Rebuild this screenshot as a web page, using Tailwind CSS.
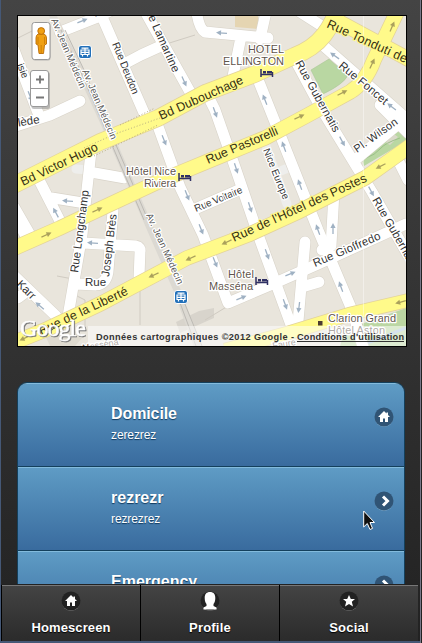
<!DOCTYPE html>
<html lang="fr">
<head>
<meta charset="utf-8">
<title>Homescreen</title>
<script src="https://cdn.jsdelivr.net/npm/@tailwindcss/browser@4"></script>
</head>
<body class="w-[422px] h-[643px] overflow-hidden bg-[#222] font-['Liberation_Sans',Arial,sans-serif]">
<div class="relative flex flex-col w-[422px] h-[643px] overflow-hidden bg-linear-to-b from-[#444] to-[#222] border-l border-[#455876] pl-4">

  <svg class="shrink-0 mt-[15px] w-[390px] h-[332px] border border-black" viewBox="18 16 388 330" font-family="Liberation Sans, Arial, sans-serif">
    <defs>
      <g id="arrow"><path d="M-5 0H3" stroke-width="1.3" fill="none"/><path d="M1 -2.6L6 0L1 2.6Z" stroke="none"/></g>
      <g id="bed"><path d="M-6 -4V4M-6 1.5H5.500M5.500 -1V4" stroke="#303064" stroke-width="1.500" fill="none"/><path d="M-4 -2h3v2.500h-3zM0 -2h5v2.500h-5z" fill="#303064"/></g>
      <g id="tram"><rect x="-6.500" y="-6.500" width="13" height="13" rx="2.500" fill="#2270b9" stroke="#fff"/><path d="M-3.500 -3.800H3.500M0 -4V-2M-4 -2H4V2.500H-4ZM-4 .3H4M0 -2V2M-2.500 2.500V4.500M2.500 2.500V4.500" stroke="#fff" stroke-width="1.200" fill="none"/></g>
      <g id="white-roads">
        <path d="M60 32L98 17L112 10M100 12L148 122M142 6L190 92M196 6Q198 28 205 32L268 38M266 12L260 39M241 37L233 76M124 64L141 55L163 45"/>
        <path d="M155 118L180 187L203 235L228 303L275 283L318 264L406 224M205 90L215 110L235 167L260 240L291 325M255 72L277 127L318 230L352 310L364 350"/>
        <path d="M293 56L322 110L372 192L408 255M318 41L408 120M300 12L325 28M355 160L402 121M380 105L408 133M195 209L241 189M334 193L331 246L322 250M305 242L298 322M302 287L319 282M398 160L408 180"/>
        <path d="M14 50L38 113M10 128L50 115L80 101M91 152L82 235L67 322M90 172L124 178M38 178L62 225M53 198L84 203M14 207L33 240M113 210L108 272Q106 284 96 285L76 284M83 243L136 246Q141 247 140 252L139 278M8 270L56 316M18 222L28 240M18 298L26 292"/>
      </g>
      <g id="yellow-roads">
        <path stroke-width="16" d="M10 187L60 162L100 142L158 118L205 93L255 74L294 56Q313 49 324 35Q331 26 338 10"/>
        <path stroke-width="14" d="M332 18L410 60M10 250L60 228L100 209L160 181L211 160L265 138L308 115L350 92Q366 82 374 60L398 10M10 344L45 330L100 304L187 258L250 234L298 212L365 178L410 146"/>
        <path stroke-width="13" d="M225 350L288 333L350 314L410 300"/>
      </g>
    </defs>
    <rect x="18" y="16" width="388" height="330" fill="#e9e5dc"/>
    <path d="M235 16H258V29L235 27Z" fill="#e5d5b2"/>
    <path d="M311 70L329 59L348 75Q344 84 323 94Z" fill="#b9d7a2" stroke="#a9c696" stroke-width=".6"/>
    <path d="M361 154L408 121V140L364 166Z" fill="#b9d7a2"/><path d="M386 143l4-7 4-2 4 3-8 8z" fill="#d9d8c8"/><path d="M366 158Q375 155 380 149T400 138" fill="none" stroke="#9cbf8a"/>
    <path d="M345 330L406 308V346H340Z" fill="#bbd6a3"/><path d="M360 346L406 328" stroke="#aac4dd" stroke-width="3"/>
    <path d="M176 322L199 311L214 308V318L180 333Z" fill="#d8d4cc"/><path d="M45 335L70 326L82 338L75 346H50Z" fill="#dedacf"/>
    <path d="M57 276L73 279M140 273V325M163 45L195 35M205 320L228 306M18 38L32 31M75 295L85 300V330" stroke="#d0cbc2" fill="none"/>
    <path d="M76 169L88 170M263 138L287 204M278 172L288 168" stroke="#eeeeec" stroke-width="9" stroke-linecap="round"/>
    <g fill="none" stroke-linecap="round" stroke-linejoin="round">
      <use href="#white-roads" stroke="#d9d4ca" stroke-width="12"/>
      <use href="#white-roads" stroke="#fff" stroke-width="10.800"/>
    </g>
    <path d="M52 14L82 75L115 147L150 228L177 290L198 348" fill="none" stroke="#dcd9d2" stroke-width="7"/>
    <path d="M65 30L84 70L116 145L148 220M180 292L202 346M61 30L80 70L112 145L144 220M176 292L196 346" fill="none" stroke="#bdbab4" stroke-width="1"/>
    <g fill="none">
      <g stroke="#e3d39a"><path stroke-width="17.500" d="M10 187L60 162L100 142L158 118L205 93L255 74L294 56Q313 49 324 35Q331 26 338 10"/><path stroke-width="15.500" d="M332 18L410 60M10 250L60 228L100 209L160 181L211 160L265 138L308 115L350 92Q366 82 374 60L398 10M10 344L45 330L100 304L187 258L250 234L298 212L365 178L410 146"/><path stroke-width="14.500" d="M225 350L288 333L350 314L410 300"/></g>
      <use href="#yellow-roads" stroke="#fffa8a"/>
    </g>
    <path d="M84 148L115 134L160 118M94 156L158 125M120 125L155 108" fill="none" stroke="#b8ae80" stroke-dasharray="1 2"/>
    <path d="M363.500 16V346" stroke="#fff" stroke-opacity=".4"/>
    <g fill="#9fb1c3" stroke="#9fb1c3">
      <use href="#arrow" transform="translate(82 21) rotate(-22)"/><use href="#arrow" transform="translate(184 81) rotate(66)"/><use href="#arrow" transform="translate(222 33) rotate(184)"/>
      <use href="#arrow" transform="translate(265 100) rotate(-112)"/><use href="#arrow" transform="translate(215 112) rotate(70)"/><use href="#arrow" transform="translate(335 56) rotate(215)"/><use href="#arrow" transform="translate(392 107) rotate(218)"/>
      <use href="#arrow" transform="translate(164 140) rotate(68)"/><use href="#arrow" transform="translate(187 195) rotate(68)"/><use href="#arrow" transform="translate(201 229) rotate(68)"/><use href="#arrow" transform="translate(215 262) rotate(68)"/>
      <use href="#arrow" transform="translate(284 147) rotate(-110)"/><use href="#arrow" transform="translate(300 185) rotate(-110)"/><use href="#arrow" transform="translate(318 230) rotate(-110)"/><use href="#arrow" transform="translate(341 287) rotate(-110)"/>
      <use href="#arrow" transform="translate(236 168) rotate(72)"/><use href="#arrow" transform="translate(250 207) rotate(72)"/><use href="#arrow" transform="translate(267 254) rotate(70)"/><use href="#arrow" transform="translate(285 304) rotate(70)"/>
      <use href="#arrow" transform="translate(299 307) rotate(97)"/><use href="#arrow" transform="translate(333 229) rotate(-90)"/><use href="#arrow" transform="translate(342 141) rotate(62)"/><use href="#arrow" transform="translate(371 191) rotate(62)"/>
      <use href="#arrow" transform="translate(241 298) rotate(-23)"/><use href="#arrow" transform="translate(290 274) rotate(-22)"/><use href="#arrow" transform="translate(68 201) rotate(184)"/><use href="#arrow" transform="translate(56 213) rotate(-118)"/><use href="#arrow" transform="translate(93 243) rotate(184)"/><use href="#arrow" transform="translate(40 306) rotate(220)"/><use href="#arrow" transform="translate(30 96) rotate(68)"/>
    </g>
    <g fill="#aaa05c" stroke="#aaa05c">
      <use href="#arrow" transform="translate(97 210) rotate(-24)"/><use href="#arrow" transform="translate(46 235) rotate(-24)"/><use href="#arrow" transform="translate(154 275) rotate(155)"/><use href="#arrow" transform="translate(191 258) rotate(155)"/><use href="#arrow" transform="translate(25 338) rotate(155)"/><use href="#arrow" transform="translate(227 242) rotate(155)"/>
      <use href="#arrow" transform="translate(299 117) rotate(-24)"/><use href="#arrow" transform="translate(342 93) rotate(-27)"/><use href="#arrow" transform="translate(372 64) rotate(-65)"/><use href="#arrow" transform="translate(392 27) rotate(-67)"/><use href="#arrow" transform="translate(381 166) rotate(153)"/><use href="#arrow" transform="translate(401 302) rotate(165)"/>
    </g>
    <g font-size="12.500" fill="#363012" stroke="#fffa8a" stroke-width="2" paint-order="stroke">
      <text transform="translate(23 186) rotate(-25.500)" textLength="84">Bd Victor Hugo</text>
      <text transform="translate(161 120) rotate(-24)" textLength="91">Bd Dubouchage</text>
      <text transform="translate(208 164) rotate(-22.900)" textLength="77">Rue Pastorelli</text>
      <text transform="translate(234 242) rotate(-24.500)" textLength="147">Rue de l'Hôtel des Postes</text>
      <text transform="translate(41 335) rotate(-25)" textLength="97">Rue de la Liberté</text>
      <text transform="translate(326 27) rotate(24.500)" textLength="87">Rue Tonduti de</text>
    </g>
    <g font-size="11.500" fill="#333" stroke="#fff" stroke-width="2.500" stroke-linejoin="round" paint-order="stroke">
      <text transform="translate(338 67) rotate(39.500)" textLength="60">Rue Foncet</text>
      <text transform="translate(295 63) rotate(61)" textLength="80">Rue Gubernatis</text>
      <text transform="translate(372 200) rotate(60)" textLength="80">Rue Gubernatis</text>
      <text transform="translate(112 44) rotate(68)" font-size="10.500" textLength="55">Rue Deudon</text>
      <text transform="translate(173 73) rotate(66)" text-anchor="end" textLength="76">Rue Lamartine</text>
      <text transform="translate(263 150) rotate(68)" font-size="10" textLength="54">Nice Europe</text>
      <text transform="translate(196 212) rotate(-22.600)" font-size="10" textLength="51">Rue Voltaire</text>
      <text transform="translate(357 153) rotate(-35.500)" font-size="11" textLength="51">Pl. Wilson</text>
      <text transform="translate(315 267) rotate(-23)" textLength="72">Rue Gioffredo</text>
      <text transform="translate(78 273) rotate(-82.500)" textLength="83">Rue Longchamp</text>
      <text transform="translate(109 277) rotate(-83)" textLength="63">Joseph Brès</text>
      <text x="85" y="286">Rue</text>
      <text transform="translate(16 285) rotate(44)">Karr</text>
      <text transform="translate(40 123) rotate(-9)" text-anchor="end">Mlède</text>
      <text transform="translate(17 65) rotate(68)" font-size="10">isie</text>
      <text transform="translate(95 17) rotate(-22)" font-size="10">Ra</text>
      <g font-size="9.500" fill="#555">
        <text transform="translate(51 20) rotate(67)" textLength="75">Av. Jean Médecin</text>
        <text transform="translate(82 71) rotate(67)" textLength="75">Av. Jean Médecin</text>
        <text transform="translate(146 215) rotate(65.500)" textLength="77">Av. Jean Médecin</text>
      </g>
    </g>
    <g font-size="11" fill="#61554c" stroke="#fff" stroke-width="2.500" stroke-linejoin="round" paint-order="stroke">
      <text x="248" y="53" textLength="36">HOTEL</text><text x="223" y="65" textLength="61">ELLINGTON</text>
      <text x="126" y="175" textLength="50">Hôtel Nice</text><text x="144" y="187" textLength="32">Riviera</text>
      <text x="228" y="278" textLength="26">Hôtel</text><text x="209" y="290" textLength="44">Masséna</text>
      <text x="328" y="322" textLength="68">Clarion Grand</text><text x="328" y="334" textLength="57">Hôtel Aston</text>
      <text transform="translate(83 351) rotate(-10)" font-size="9">Masséna</text><text transform="translate(273 349) rotate(-10)" font-size="9">Faure</text>
    </g>
    <rect x="318" y="321" width="4.500" height="4.500" fill="#4b3c32"/>
    <use href="#bed" x="267" y="73"/><use href="#bed" x="185" y="177"/><use href="#bed" x="262" y="281"/>
    <use href="#tram" x="85" y="52"/><use href="#tram" x="181" y="297"/>

    <rect x="88" y="326" width="318" height="20" fill="#fff" fill-opacity=".5"/>
    <g font-family="Liberation Serif, serif" font-size="24" style="filter:drop-shadow(1px 1px 0.500px #777)">
      <text x="20" y="336" textLength="66" fill="#fff" stroke="#fff" stroke-width=".5">Google</text>
    </g>
    <g font-size="9.200" font-weight="bold" fill="#333">
      <text x="96" y="340" textLength="198">Données cartographiques ©2012 Google -</text>
      <text x="297" y="340" textLength="107">Conditions d'utilisation</text><path d="M297 341.500H404" stroke="#333"/>
    </g>
    <g stroke="#999">
      <rect x="32.500" y="24.500" width="18" height="36" rx="2.500" fill="#888" fill-opacity=".5" stroke="none"/>
      <rect x="32" y="22.500" width="18" height="37" rx="2.500" fill="#fff"/>
      <rect x="31.500" y="72" width="18.500" height="37" rx="2.500" fill="#888" fill-opacity=".5" stroke="none"/>
      <rect x="30.500" y="70.500" width="18" height="36" rx="2.500" fill="#fff"/><path d="M30.500 88.500H48.500"/>
    </g>
    <path d="M36 79.500H44M40 75.500V83.500M36 97.500H44" stroke="#777" stroke-width="1.800"/>
    <path d="M38 34Q36 35 36 38V44L38 45L39 53.500H43.500L44.500 45L46.500 44V38Q46.500 35 44 34Z" fill="#f0a012" stroke="#b96b07" stroke-width=".9"/><circle cx="41.200" cy="31" r="3.400" fill="#f0a012" stroke="#b96b07" stroke-width=".9"/><path d="M38 37V44M44.500 37V44M41.200 45V53" stroke="#c77909" stroke-width=".8"/>
  </svg>

  <main class="mt-[35px] flex w-[388px] flex-col overflow-hidden rounded-t-[10px] border border-[#14405c] text-white [text-shadow:0_1px_1px_#113a5f]">
    <section class="flex h-[83px] shrink-0 items-start justify-between border-t border-[#83bbdc] bg-linear-to-b from-[#5f9cc5] to-[#396b9e] pl-[93px] pr-[10px]">
      <div class="pt-5"><h2 class="text-base leading-5 font-bold tracking-[-.1px]">Domicile</h2><p class="mt-[3px] text-xs leading-4 tracking-[-.1px]">zerezrez</p></div>
      <svg class="mt-[23px] size-5" viewBox="0 0 20 20"><circle cx="10" cy="10.800" r="9.200" fill="#83aecd"/><circle cx="10" cy="10" r="9.500" fill="#305475"/><path d="M10 4L4 10H6V15H9V11.500H11V15H14V10H16L14 8V5.500H12.500V6.500Z" fill="#fff"/></svg>
    </section>
    <section class="flex h-[84px] shrink-0 items-start justify-between border-t border-[#14405c] bg-linear-to-b from-[#5f9cc5] to-[#396b9e] pl-[93px] pr-[10px] shadow-[inset_0_1px_#83bbdc]">
      <div class="pt-[21px]"><h2 class="text-base leading-5 font-bold">rezrezr</h2><p class="mt-[3px] text-xs leading-4 tracking-[-.1px]">rezrezrez</p></div>
      <svg class="mt-6 size-5" viewBox="0 0 20 20"><circle cx="10" cy="10.800" r="9.200" fill="#83aecd"/><circle cx="10" cy="10" r="9.500" fill="#305475"/><path d="M9 5.500L13.500 10L9 14.500" fill="none" stroke="#fff" stroke-width="3"/></svg>
    </section>
    <section class="flex h-[84px] shrink-0 items-start justify-between border-t border-[#14405c] bg-linear-to-b from-[#5f9cc5] to-[#396b9e] pl-[93px] pr-[10px] shadow-[inset_0_1px_#83bbdc]">
      <div class="pt-[21px]"><h2 class="text-base leading-5 font-bold">Emergency</h2></div>
      <svg class="mt-6 size-5" viewBox="0 0 20 20"><circle cx="10" cy="10" r="9.500" fill="#305475"/><path d="M9 5.500L13.500 10L9 14.500" fill="none" stroke="#fff" stroke-width="3"/></svg>
    </section>
  </main>

  <nav class="absolute left-0 top-[584px] flex h-[57px] w-[417px] border-t border-[#222] bg-linear-to-b from-[#444] to-[#2b2b2b] text-[13px] font-bold text-white shadow-[inset_0_1px_#777] [text-shadow:0_1px_1px_#000]">
    <a class="flex w-[140px] flex-col items-center gap-[9px] border-r border-l border-black pt-[6px] leading-4"><svg class="size-5" viewBox="0 0 20 20"><circle cx="10" cy="10.800" r="9.200" fill="#888"/><circle cx="10" cy="10" r="9.500" fill="#222"/><path d="M10 4L4 10H6V15H9V11.500H11V15H14V10H16L14 8V5.500H12.500V6.500Z" fill="#fff"/></svg><span class="tracking-[.1px]">Homescreen</span></a>
    <a class="flex w-[139px] flex-col items-center gap-[9px] border-r border-black pt-[6px] leading-4"><svg class="size-5" viewBox="0 0 20 20"><circle cx="10" cy="10.800" r="9.200" fill="#888"/><circle cx="10" cy="10" r="9.500" fill="#222"/><path d="M10 1C6.500 1 4.700 3 4.700 7C4.700 10 5.500 12 6.500 13V15L3.500 16.500V18.500H16.500V16.500L13.500 15V13C14.500 12 15.300 10 15.300 7C15.300 3 13.500 1 10 1Z" fill="#fff"/></svg><span class="tracking-[.2px]">Profile</span></a>
    <a class="flex w-[138px] flex-col items-center gap-[9px] pt-[6px] leading-4"><svg class="size-5" viewBox="0 0 20 20"><circle cx="10" cy="10.800" r="9.200" fill="#888"/><circle cx="10" cy="10" r="9.500" fill="#222"/><path d="M10 4L11.800 8H16L12.800 10.800L14 15.500L10 13L6 15.500L7.200 10.800L4 8H8.200Z" fill="#fff"/></svg><span class="tracking-[.2px]">Social</span></a>
  </nav>
  <div class="absolute bottom-0 left-0 h-[2px] w-[421px] bg-[#455876]"></div>
  <div class="absolute right-0 top-0 h-[643px] w-[2px] border-l border-[#778] bg-[#222]"></div>
  <svg class="absolute left-[362px] top-[510px] h-[21px] w-3" viewBox="0 0 12 21"><path d="M.7 1V17L4.300 13.500L7 19.500L9.500 18.400L7 12.500H11.500Z" fill="#111" stroke="#fff"/></svg>
</div>
</body>
</html>
